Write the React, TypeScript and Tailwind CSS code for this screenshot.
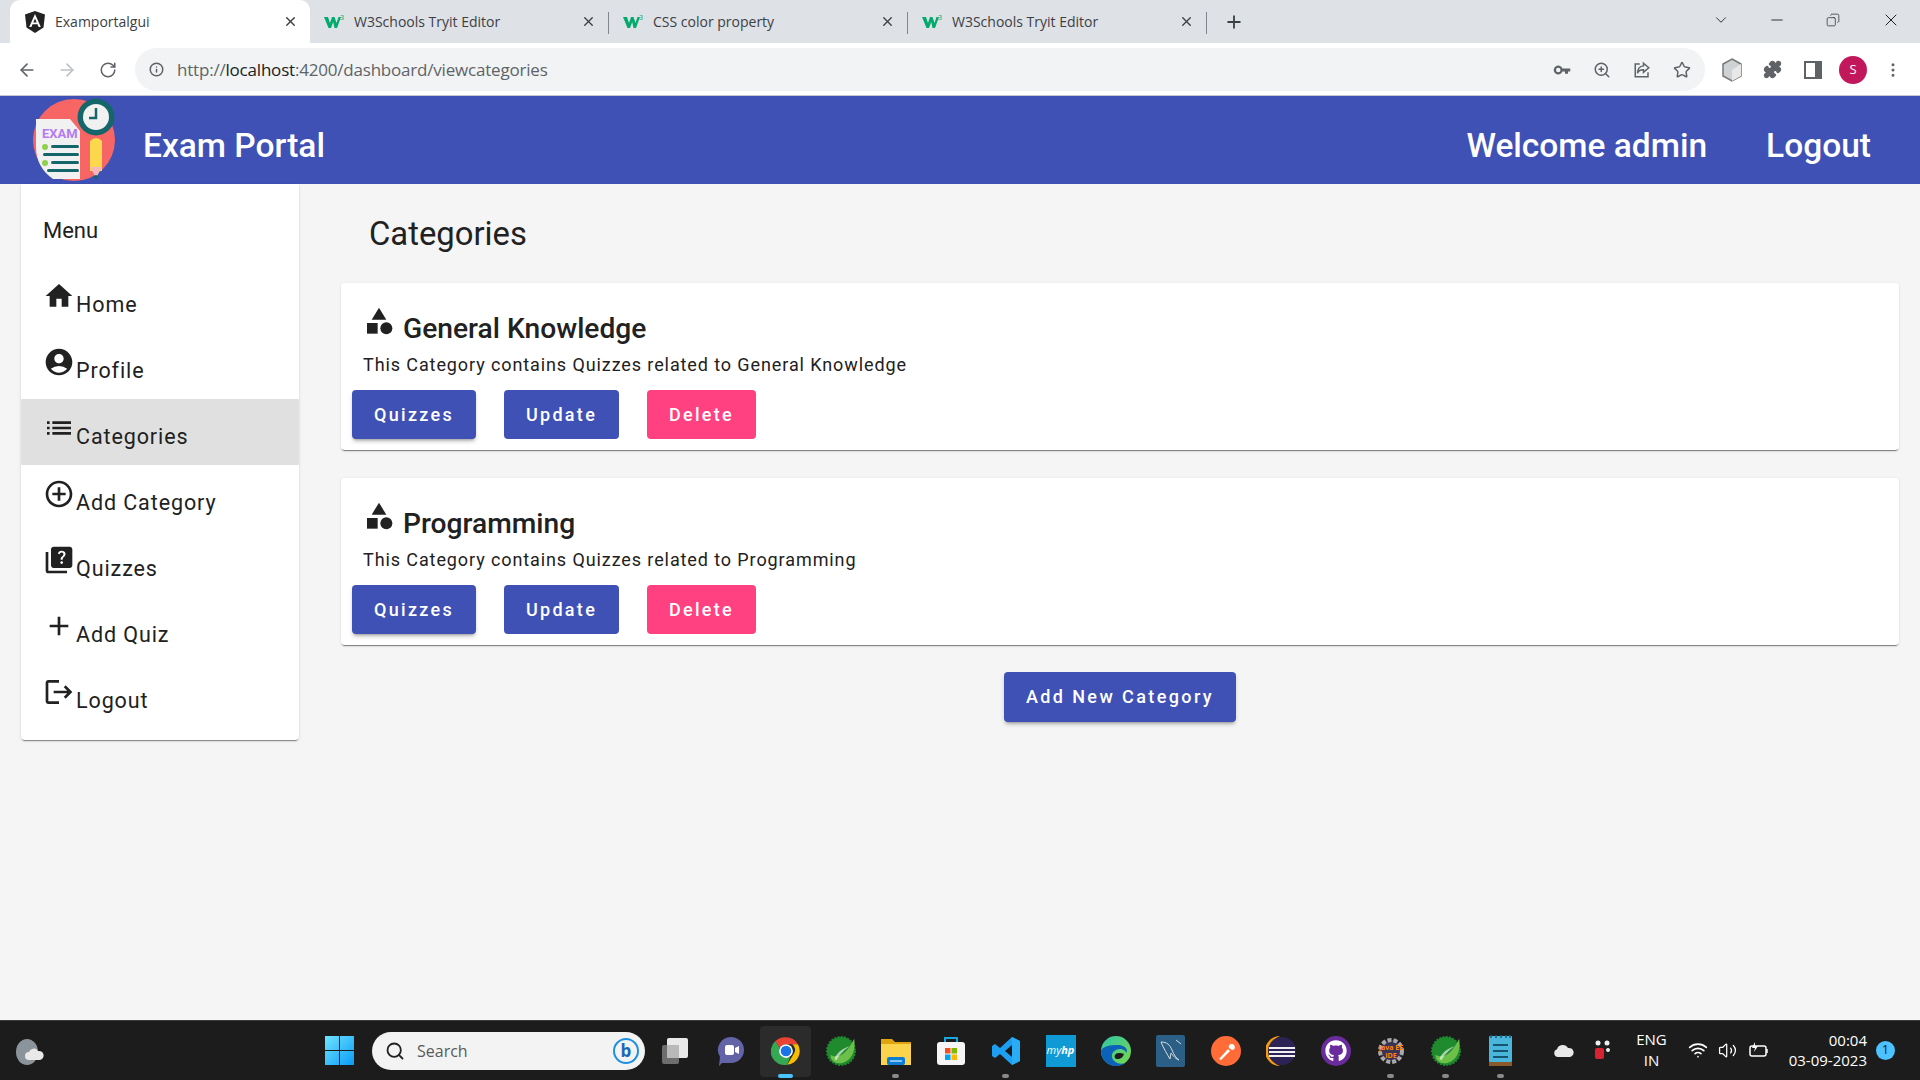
import type { ReactNode } from "react";
import { MdAccountCircle, MdAdd, MdAddCircleOutline, MdCategory, MdHome, MdList, MdLogout, MdQuiz } from "react-icons/md";
import { FaGithub } from "react-icons/fa";
import { ArrowLeft, ArrowRight, ChevronDown, Info, Minus, Plus, RotateCw, Search, Star, Volume2, Wifi, X, ZoomIn, MoreVertical, Puzzle, Copy } from "lucide-react";

const menu = [
  { label: "Home", icon: <MdHome size={32} /> },
  { label: "Profile", icon: <MdAccountCircle size={32} /> },
  { label: "Categories", icon: <MdList size={32} />, active: true },
  { label: "Add Category", icon: <MdAddCircleOutline size={32} /> },
  { label: "Quizzes", icon: <MdQuiz size={32} /> },
  { label: "Add Quiz", icon: <MdAdd size={32} /> },
  { label: "Logout", icon: <MdLogout size={32} /> },
];

const categories = [
  { title: "General Knowledge", description: "This Category contains Quizzes related to General Knowledge" },
  { title: "Programming", description: "This Category contains Quizzes related to Programming" },
];

function W3Logo() {
  return (
    <svg width="20" height="16" viewBox="0 0 20 16" className="shrink-0">
      <path d="M0 3h4l2 6 2-6h2.500l2 6 2-6H17l-4 11h-2.500L9.200 8 7 14H4.500z" fill="#04aa6d" />
      <text x="16" y="6" fontSize="7" fill="#04aa6d" fontFamily="Noto Sans, sans-serif">3</text>
    </svg>
  );
}

function AngularLogo() {
  return (
    <svg width="20" height="22" viewBox="0 0 20 22" className="shrink-0">
      <path d="M10 0 0 3.600l1.500 13L10 22l8.500-5.400 1.500-13z" fill="#222" />
      <path d="M10 3 4.200 16h2.200l1.100-2.800h5l1.100 2.800h2.200zm0 4.500 1.700 4H8.300z" fill="#fff" />
    </svg>
  );
}

function Tab({ title, active, icon, sep }: { title: string; active?: boolean; icon: ReactNode; sep?: boolean }) {
  return (
    <div className={active ? "relative flex h-[43px] w-[300px] items-center rounded-t-[10px] bg-white pl-[15px] pr-[12px]" : "relative flex h-[43px] w-[299px] items-center pl-[14px] pr-[13px]"}>
      {icon}
      <span className="ml-[10px] flex-1 truncate pb-[1px] text-[14px] text-[#3c4043]">{title}</span>
      <X size={15} strokeWidth={2.2} className="text-[#3c4043]" />
      {sep && <span className="absolute right-0 top-[12px] h-[22px] w-px bg-[#80868b]" />}
    </div>
  );
}

function ExamLogo() {
  return (
    <svg width="84" height="84" viewBox="0 0 84 84">
      <ellipse cx="41" cy="43" rx="41" ry="41" fill="#f76565" />
      <path d="M3 22h34l10 12v48H20Q3 70 3 50z" fill="#f1f1f1" />
      <text x="9" y="41" fontSize="13" fontWeight="700" fill="#b57bf0" fontFamily="Roboto, sans-serif">EXAM</text>
      <circle cx="12" cy="50" r="3" fill="#8ed14f" />
      <rect x="18" y="48" width="28" height="3" rx="1.500" fill="#14666b" />
      <rect x="10" y="56" width="36" height="3" rx="1.500" fill="#14666b" />
      <circle cx="12" cy="66" r="3" fill="#8ed14f" />
      <rect x="18" y="64" width="28" height="3" rx="1.500" fill="#14666b" />
      <rect x="14" y="72" width="32" height="3" rx="1.500" fill="#14666b" />
      <circle cx="63" cy="20" r="18.500" fill="#14666b" />
      <circle cx="63" cy="20" r="13" fill="#f1f1f1" />
      <path d="M63 11v10h-7" stroke="#14666b" strokeWidth="2.500" fill="none" />
      <path d="M57 44q6-6 12 0v30H57z" fill="#fbd84c" />
      <path d="M57 70h12l-6 11z" fill="#f8b7b7" />
      <circle cx="63" cy="80" r="2" fill="#14666b" />
    </svg>
  );
}

function ChromeLogo() {
  return (
    <svg width="30" height="30" viewBox="0 0 48 48">
      <path d="M24 2a22 22 0 0 1 19 11H24a11 11 0 0 0-10 7L7 8a22 22 0 0 1 17-6z" fill="#ea4335" />
      <path d="M43 13a22 22 0 0 1-17 33l10-17a11 11 0 0 0-2-16z" fill="#fbbc04" />
      <path d="M26 46A22 22 0 0 1 7 8l10 17a11 11 0 0 0 14 8z" fill="#34a853" />
      <circle cx="24" cy="24" r="11" fill="#fff" />
      <circle cx="24" cy="24" r="8.500" fill="#1a73e8" />
    </svg>
  );
}

function SpringLogo({ size = 30 }: { size?: number }) {
  return (
    <svg width={size} height={size} viewBox="0 0 32 32">
      <circle cx="16" cy="16" r="15" fill="#1f8a2e" strokeDasharray="2 1.500" stroke="#1f8a2e" strokeWidth="2" />
      <path d="M30 3c2 12-2 24-14 26C8 30 4 24 5 20c6 4 16 2 25-17z" fill="#6cc04a" />
      <path d="M9 24C13 16 19 13 25 11 20 15 15 19 11 26z" fill="#fff" opacity=".6" />
    </svg>
  );
}

function Task({ children, dot, active }: { children: ReactNode; dot?: boolean; active?: boolean }) {
  return (
    <div className="relative flex h-[60px] w-[55px] shrink-0 items-center justify-center">
      {active && <span className="absolute inset-x-[2px] top-[5px] bottom-[4px] rounded-[4px] bg-[#2b2b2b]" />}
      <span className="relative flex">{children}</span>
      {dot && <span className="absolute bottom-[3px] h-[4px] w-[7px] rounded-full bg-[#8a8a8a]" />}
      {active && <span className="absolute bottom-[3px] h-[4px] w-[15px] rounded-full bg-[#4cc2ff]" />}
    </div>
  );
}

export default function App() {
  return (
    <div className="flex h-screen w-full flex-col overflow-hidden bg-[#f5f5f5] font-['Roboto',sans-serif]">
      {/* browser chrome */}
      <div className="flex h-[43px] shrink-0 items-end bg-[#dee1e6] pl-[10px] font-['Open_Sans',sans-serif]">
        <Tab title="Examportalgui" active icon={<AngularLogo />} />
        <Tab title="W3Schools Tryit Editor" icon={<W3Logo />} sep />
        <Tab title="CSS color property" icon={<W3Logo />} sep />
        <Tab title="W3Schools Tryit Editor" icon={<W3Logo />} sep />
        <Plus size={20} strokeWidth={2.2} className="mb-[11px] ml-[17px] text-[#3c4043]" />
        <div className="ml-auto mb-[13px] flex items-center text-[#222]">
          <ChevronDown size={18} strokeWidth={1.2} className="mr-[38px]" />
          <Minus size={18} strokeWidth={1.2} className="mr-[40px]" />
          <Copy size={14} strokeWidth={1.2} className="mr-[41px] -scale-x-100" />
          <X size={20} strokeWidth={1.2} className="mr-[19px]" />
        </div>
      </div>
      <div className="flex h-[53px] shrink-0 items-center border-b border-[#c5c8ce] bg-white pt-[1px] font-['Open_Sans',sans-serif]">
        <ArrowLeft size={20} className="ml-[17px] text-[#5f6368]" />
        <ArrowRight size={20} className="ml-[20px] text-[#bdc1c6]" />
        <RotateCw size={18} className="ml-[22px] text-[#5f6368]" />
        <div className="ml-[18px] flex h-[43px] w-[1570px] items-center rounded-full bg-[#f1f3f4] pl-[14px] text-[#5f6368]">
          <Info size={15} strokeWidth={2.4} />
          <span className="ml-[13px] text-[17px] tracking-[-0.2px]">
            http://<span className="text-[#202124]">localhost</span>:4200/dashboard/viewcategories
          </span>
          <div className="ml-auto flex items-center gap-[22px] pr-[14px]">
            <svg width="18" height="18" viewBox="0 0 24 24" fill="#5f6368"><path d="M12.600 10a6 6 0 1 0 0 4H16v3h4v-3h3v-4zM7 15a3 3 0 1 1 0-6 3 3 0 0 1 0 6z" /></svg>
            <ZoomIn size={18} />
            <svg width="18" height="18" viewBox="0 0 24 24" fill="none" stroke="#5f6368" strokeWidth="2"><path d="M9 4H3v17h17v-6" /><path d="M14 3l7 6-7 6v-3.500c-4 0-7 1.500-8 5 0-6 3-9.500 8-10z" /></svg>
            <Star size={18} />
          </div>
        </div>
        <div className="flex flex-1 items-center text-[#5f6368]">
          <svg width="22" height="24" viewBox="0 0 22 24" className="ml-[16px]"><path d="M11 1l9 5v12l-9 5-9-5V6z" fill="#cfd2d4" stroke="#777" strokeWidth="1.500" /><path d="M11 12l9-6v12l-9 5z" fill="#e8e8e8" /></svg>
          <Puzzle size={19} fill="#5f6368" className="ml-[20px]" />
          <svg width="18" height="18" viewBox="0 0 18 18" className="ml-[22px]"><path d="M1 1h16v16H1z" fill="none" stroke="#5f6368" strokeWidth="2" /><path d="M11 1h6v16h-6z" fill="#5f6368" /></svg>
          <span className="ml-[17px] flex h-[28px] w-[28px] items-center justify-center rounded-full bg-[#c2185b] text-[13px] text-white">S</span>
          <MoreVertical size={18} className="ml-[17px]" />
        </div>
      </div>

      {/* app toolbar */}
      <header className="flex h-[88px] shrink-0 items-center bg-[#3f51b5] pl-[33px] pr-[49px] text-white">
        <div className="-mt-[3px]"><ExamLogo /></div>
        <span className="ml-[26px] pt-[12px] text-[33.500px] font-medium">Exam Portal</span>
        <span className="ml-auto pt-[12px] text-[33.500px] font-medium">Welcome admin</span>
        <span className="ml-[59px] pt-[12px] text-[33.500px] font-medium">Logout</span>
      </header>

      {/* page */}
      <div className="flex min-h-0 flex-1">
        <aside className="ml-[21px] h-[556px] w-[278px] shrink-0 rounded-b-[4px] bg-white text-[#212121] shadow-[0_2px_1px_-1px_rgba(0,0,0,0.4),0_1px_3px_rgba(0,0,0,0.15)]">
          <div className="flex h-[83px] items-center pl-[22px] pt-[10px] text-[22px]">Menu</div>
          {menu.map((item) => (
            <div key={item.label} className={item.active ? "flex h-[66px] items-start bg-[#e0e0e0] pl-[22px] pt-[13px]" : "flex h-[66px] items-start pl-[22px] pt-[13px]"}>
              <span className="shrink-0 text-[#212121]">{item.icon}</span>
              <span className="ml-[1px] mt-[10px] text-[21.500px] leading-[30px] tracking-[0.9px]">{item.label}</span>
            </div>
          ))}
        </aside>

        <main className="ml-[42px] flex-1 pr-[21px]">
          <h1 className="mt-[29px] ml-[28px] h-[42px] text-[32.800px] leading-[43px] text-[#212121]">Categories</h1>
          <div className="mt-[28px] flex flex-col gap-[28px]">
            {categories.map((c) => (
              <section key={c.title} className="h-[167px] rounded-[4px] bg-white pl-[11px] pt-[22px] text-[#212121] shadow-[0_2px_1px_-1px_rgba(0,0,0,0.45),0_1px_3px_rgba(0,0,0,0.12)]">
                <div className="ml-[11px] flex h-[39px] items-start">
                  <MdCategory size={32} className="ml-0 text-[#212121]" />
                  <span className="ml-[8px] mt-[9px] text-[28.200px] font-medium leading-[30px]">{c.title}</span>
                </div>
                <p className="ml-[11px] mt-[9px] text-[18px] leading-[24px] tracking-[0.9px]">{c.description}</p>
                <div className="mt-[13px] flex gap-[28px]">
                  <button className="h-[49px] w-[124px] rounded-[4px] bg-[#3f51b5] pb-[1px] text-[18px] font-medium tracking-[2.300px] text-white shadow-[0_3px_3px_-2px_rgba(0,0,0,0.3),0_3px_4px_rgba(0,0,0,0.14)]">Quizzes</button>
                  <button className="h-[49px] w-[115px] rounded-[4px] bg-[#3f51b5] pb-[1px] text-[18px] font-medium tracking-[2.300px] text-white">Update</button>
                  <button className="h-[49px] w-[109px] rounded-[4px] bg-[#ff4081] pb-[1px] text-[18px] font-medium tracking-[2.300px] text-white">Delete</button>
                </div>
              </section>
            ))}
          </div>
          <div className="mt-[27px] flex justify-center">
            <button className="h-[50px] w-[232px] rounded-[4px] bg-[#3f51b5] pb-[2px] text-[18px] font-medium tracking-[2.400px] text-white shadow-[0_3px_3px_-2px_rgba(0,0,0,0.3),0_3px_4px_rgba(0,0,0,0.14)]">Add New Category</button>
          </div>
        </main>
      </div>

      {/* windows taskbar */}
      <footer className="flex h-[60px] shrink-0 items-center border-t border-[#3a3a3a] bg-[#1c1c1c] font-['Open_Sans',sans-serif] text-white">
        <div className="ml-[14px] h-[26px] w-[30px] shrink-0">
          <svg width="30" height="28" viewBox="0 0 30 28"><ellipse cx="13" cy="14" rx="11" ry="13" fill="#8b949b" /><path d="M15 22a4 4 0 0 1 0-8 5 5 0 0 1 9-1 4.500 4.500 0 0 1 2 9z" fill="#e9e9e9" /></svg>
        </div>
        <div className="ml-[268px] flex w-[55px] shrink-0 justify-center">
          <svg width="29" height="29" viewBox="0 0 29 29">
            <defs><linearGradient id="win" x1="0" y1="0" x2="1" y2="1"><stop offset="0" stopColor="#6fe4ff" /><stop offset="1" stopColor="#0a9bf5" /></linearGradient></defs>
            <path d="M0 0h14v14H0zM15 0h14v14H15zM0 15h14v14H0zM15 15h14v14H15z" fill="url(#win)" />
          </svg>
        </div>
        <div className="ml-[5px] flex h-[38px] w-[273px] shrink-0 items-center rounded-full bg-[#f3f3f3] pl-[13px] pr-[6px] text-[#5a5a5a]">
          <Search size={20} strokeWidth={2.2} className="text-[#222]" />
          <span className="ml-[12px] text-[16px]">Search</span>
          <span className="ml-auto flex h-[26px] w-[26px] items-center justify-center rounded-full border-2 border-[#1e90e0] text-[17px] font-bold leading-none text-[#1668b8]">b</span>
        </div>
        <div className="ml-[3px] flex">
          <Task>
            <svg width="30" height="28" viewBox="0 0 30 28"><rect x="1" y="8" width="17" height="19" rx="2" fill="#6d6d6d" /><rect x="6" y="1" width="21" height="20" rx="2" fill="#e9e9e9" /><rect x="6" y="8" width="12" height="13" fill="#b9b9b9" /></svg>
          </Task>
          <Task>
            <svg width="28" height="30" viewBox="0 0 28 30"><path d="M14 1a13 13 0 0 1 0 26H5l-3 3 1-9A13 13 0 0 1 14 1z" fill="#6264a7" /><rect x="8" y="9" width="9" height="10" rx="2" fill="#fff" /><path d="M18 12l4-2v8l-4-2z" fill="#fff" /></svg>
          </Task>
          <Task active><ChromeLogo /></Task>
          <Task><SpringLogo /></Task>
          <Task dot>
            <svg width="30" height="28" viewBox="0 0 30 28"><path d="M0 2h11l3 3h16v5H0z" fill="#e0a50e" /><path d="M0 7h30v21H0z" fill="#fcd34d" /><rect x="6" y="20" width="18" height="8" rx="2" fill="#0c7cd5" /><rect x="9" y="23" width="12" height="2" fill="#7fc4f5" /></svg>
          </Task>
          <Task>
            <svg width="30" height="30" viewBox="0 0 30 30"><path d="M9 6V2h12v4" fill="none" stroke="#18a8e0" strokeWidth="2" /><rect x="1" y="6" width="28" height="23" rx="3" fill="#f5f5f5" /><path d="M9 12h5.500v5.500H9z" fill="#f25022" /><path d="M15.500 12H21v5.500h-5.500z" fill="#7fba00" /><path d="M9 18.500h5.500V24H9z" fill="#00a4ef" /><path d="M15.500 18.500H21V24h-5.500z" fill="#ffb900" /></svg>
          </Task>
          <Task dot>
            <svg width="30" height="30" viewBox="0 0 30 30"><path d="M21 1l8 4v20l-8 4-12-11-5 4-3-2v-10l3-2 5 4zM21 9l-7 6 7 6z" fill="#1c9ff0" fillRule="evenodd" /><path d="M21 1l8 4v20l-8 4z" fill="#27acf5" /></svg>
          </Task>
          <Task>
            <span className="flex h-[32px] w-[30px] items-center justify-center bg-[#0f9ad6] text-[11px] italic">my<b>hp</b></span>
          </Task>
          <Task>
            <svg width="30" height="30" viewBox="0 0 30 30"><defs><linearGradient id="edge" x1="0" y1="0" x2="1" y2="1"><stop offset="0" stopColor="#2fc5a8" /><stop offset="1" stopColor="#7ad94b" /></linearGradient></defs><circle cx="15" cy="15" r="15" fill="url(#edge)" /><path d="M0 15A15 15 0 0 0 24 27c-6 2-12-1-13-6-1-4 3-8 8-8 3 0 6 2 6 4 3-4-2-8-8-8C9 9 2 10 0 15z" fill="#0c62b8" /><path d="M14 19c1-2 4-3 9-1-1 3-3 5-7 5-2 0-3-2-2-4z" fill="#1c1c1c" /></svg>
          </Task>
          <Task>
            <svg width="29" height="32" viewBox="0 0 29 32"><rect width="29" height="32" rx="2" fill="#2b5f85" /><path d="M5 7c6 0 9 3 11 8s4 8 7 10c-5-2-6-5-8-7l-1 6c-3-5-6-10-9-17zM20 5l5 4" stroke="#d5dde3" strokeWidth="1" fill="none" /></svg>
          </Task>
          <Task>
            <svg width="30" height="30" viewBox="0 0 30 30"><circle cx="15" cy="15" r="15" fill="#ff6c37" /><path d="M8 23l9-10 2 2-9 9zM18 12a3 3 0 1 1 3 2z" fill="#fff" /></svg>
          </Task>
          <Task>
            <svg width="30" height="30" viewBox="0 0 30 30"><path d="M14 0a15 15 0 0 0 0 30 16 16 0 0 1 0-30z" fill="#f39c12" /><circle cx="16" cy="15" r="14" fill="#2c2255" /><path d="M3 11h26v2H3zM3 15h26v2H3zM3 19h26v2H3z" fill="#f0f0f0" /></svg>
          </Task>
          <Task>
            <span className="flex h-[30px] w-[30px] items-center justify-center rounded-full bg-[#6a2c9c]"><FaGithub size={22} color="#fff" /></span>
          </Task>
          <Task dot>
            <svg width="28" height="28" viewBox="0 0 28 28"><circle cx="14" cy="14" r="11" fill="#3a3352" stroke="#a9a9a9" strokeWidth="4" strokeDasharray="4 2" /><text x="14" y="13" textAnchor="middle" fontSize="7" fontWeight="700" fill="#ff8a00" fontFamily="Open Sans, sans-serif">Java EE</text><text x="14" y="21" textAnchor="middle" fontSize="7" fontWeight="700" fill="#ff8a00" fontFamily="Open Sans, sans-serif">IDE</text></svg>
          </Task>
          <Task dot><SpringLogo /></Task>
          <Task dot>
            <svg width="23" height="31" viewBox="0 0 23 31"><rect y="1" width="23" height="26" rx="1" fill="#4ab6dc" /><path d="M0 27h23v4H0z" fill="#8a5a2a" /><path d="M4 9h15v2H4zM4 15h15v2H4zM4 21h15v2H4z" fill="#14566f" /><path d="M2 0v3M7 0v3M12 0v3M17 0v3M21 0v3" stroke="#1a5b7a" strokeWidth="1.500" /></svg>
          </Task>
        </div>
        <div className="ml-auto flex items-center pr-[25px] pb-[1px]">
          <svg width="20" height="14" viewBox="0 0 20 14"><path d="M4 14a4 4 0 0 1-1-7.800 6 6 0 0 1 11-1.200 4.500 4.500 0 0 1 2 9z" fill="#e8e8e8" /></svg>
          <svg width="18" height="20" viewBox="0 0 18 20" className="ml-[20px]"><rect x="1" y="8" width="9" height="11" rx="2" fill="#d92231" /><circle cx="4" cy="3" r="2.500" fill="#eee" /><circle cx="13" cy="3" r="2.500" fill="#eee" /><circle cx="14" cy="10" r="2" fill="#eee" /></svg>
          <div className="ml-[24px] text-center text-[15px] leading-[21px]">ENG<br />IN</div>
          <Wifi size={20} className="ml-[21px]" />
          <Volume2 size={19} strokeWidth={1.600} className="ml-[10px]" />
          <svg width="20" height="16" viewBox="0 0 20 16" className="ml-[12px]"><rect x="1" y="4" width="16" height="10" rx="2" fill="none" stroke="#fff" strokeWidth="1.500" /><path d="M18 7v4" stroke="#fff" strokeWidth="1.500" /><path d="M6 0L3 6h3l-1 4 4-6H6z" fill="#fff" /></svg>
          <div className="ml-[20px] text-right text-[15px] leading-[20px]">00:04<br />03-09-2023</div>
          <span className="ml-[9px] flex h-[19px] w-[19px] items-center justify-center rounded-full bg-[#4cc2ff] text-[12px] text-[#111]">1</span>
        </div>
      </footer>
    </div>
  );
}
